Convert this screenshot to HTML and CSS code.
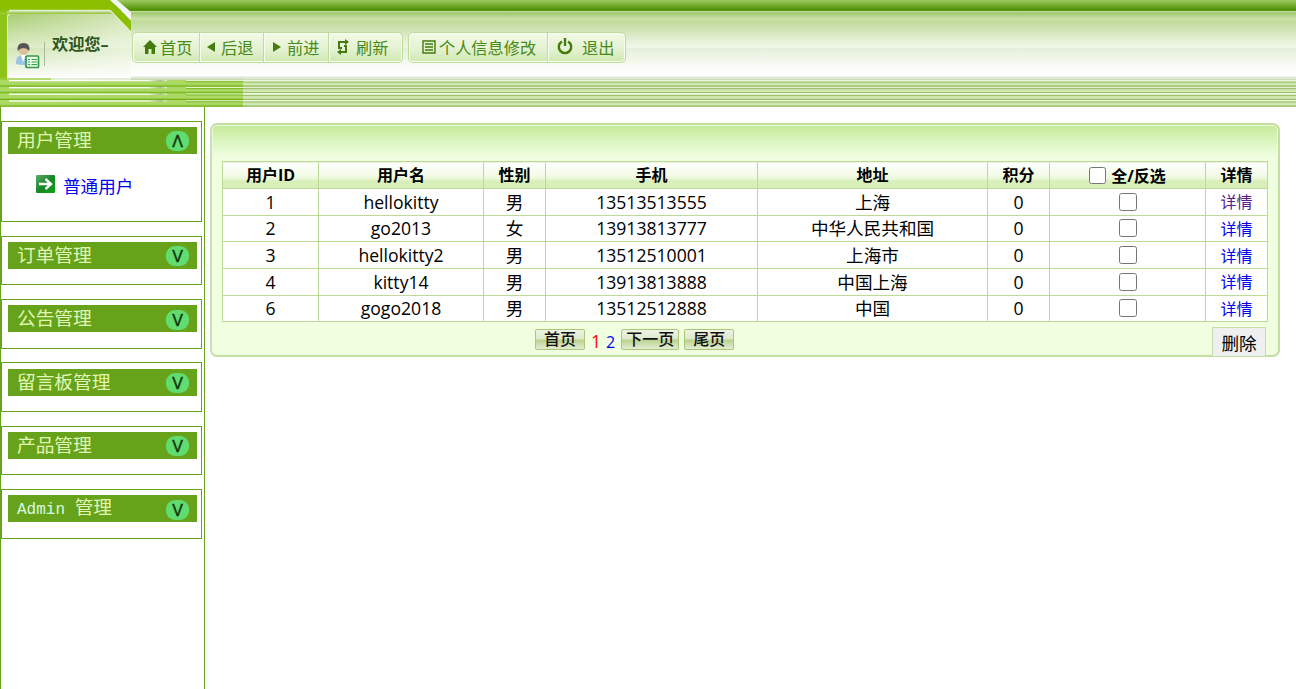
FILE: index.html
```html
<!DOCTYPE html>
<html lang="zh-CN">
<head>
<meta charset="UTF-8" />
<title>用户管理</title>
<link rel="stylesheet" href="styles.css">
</head>
<body>
<header class="header">
  <!-- 顶部左侧装饰 -->
  <svg class="header-art" width="243" height="107" viewBox="0 0 243 107">
    <defs>
      <linearGradient id="tab" x1="0" y1="0" x2="0" y2="1">
        <stop offset="0" stop-color="#a8cd72"/>
        <stop offset=".5" stop-color="#dcecc5"/>
        <stop offset=".52" stop-color="#d0e5b4"/>
        <stop offset="1" stop-color="#ffffff"/>
      </linearGradient>
      <linearGradient id="shine" x1="0" y1="0" x2="1" y2="0">
        <stop offset="0" stop-color="#fff" stop-opacity="0"/>
        <stop offset="1" stop-color="#fff" stop-opacity=".5"/>
      </linearGradient>
      <linearGradient id="line" x1="0" y1="0" x2="1" y2="0">
        <stop offset="0" stop-color="#fff"/>
        <stop offset=".88" stop-color="#f4f8ee"/>
        <stop offset=".96" stop-color="#a8bd8c"/>
        <stop offset="1" stop-color="#e8f3d8"/>
      </linearGradient>
      <pattern id="bars" width="243" height="6.65" y="80" patternUnits="userSpaceOnUse">
        <rect width="243" height="6.65" fill="#abd963"/>
        <rect y="5.4" width="243" height="1.25" fill="#6fb114"/>
      </pattern>
    </defs>
    <path d="M0 0H110L131 21V32L110 11H0Z" fill="#8bc000"/>
    <rect y="10" width="7" height="70" fill="#8fc41a"/>
    <path d="M7 80V17Q7 14 10 14H112L131 31V80Z" fill="url(#tab)"/>
    <path d="M7 80V17Q7 14 10 14H112L131 31V80Z" fill="url(#shine)"/>
    <path d="M110 11H117L131 24V32Z" fill="#8bc000"/>
    <path d="M110 0H117L131 12V20Z" fill="#f5f7f2"/>
    <path d="M9 10.5H110L131 32" fill="none" stroke="#e4efcd" stroke-width="1.3"/>
    <path d="M0 13.5H110" stroke="#a4cb38"/>
    <path d="M7.5 78V17Q7.5 14.5 10 14.5" fill="none" stroke="#e9f3da"/>
    <path d="M8 77.500H131" stroke="#fff" stroke-width="2"/>
    <path d="M0 79H51" stroke="#9fcf45" stroke-width="1.500"/>
    <path d="M51 79H243" stroke="#c9dbb0"/>
    <rect y="80" width="243" height="27" fill="url(#bars)"/>
    <g fill="url(#line)">
      <rect x="9" y="80" width="158" height="1.300"/>
      <rect x="9" y="87" width="158" height="1.300"/>
      <rect x="9" y="93.500" width="158" height="1.300"/>
      <rect x="9" y="100.300" width="158" height="1.300"/>
    </g>
    <g fill="#e4f3cb">
      <rect x="186" y="80" width="57" height="1.200"/>
      <rect x="186" y="87" width="57" height="1"/>
      <rect x="186" y="93.500" width="57" height="1"/>
      <rect x="186" y="100.300" width="57" height="1"/>
    </g>
    <path d="M186 81.700H243M186 88.500H243M186 95H243M186 101.800H243" stroke="#73b31d" stroke-width=".8"/>
  </svg>
  <div class="welcome">
    <svg class="user-icon" width="25" height="27" viewBox="0 0 25 27">
      <path d="M1 19Q1 13 7 12Q14 12 15 19V21Q8 23 1 21Z" fill="#9bc4e4"/>
      <path d="M6 12L8 19L11 12Z" fill="#fff"/>
      <circle cx="8.500" cy="7" r="5" fill="#e0bd9b"/>
      <path d="M2.800 8Q1.500 0 8.500 0Q15.500 0 14.200 8Q12 5 8.500 5Q5 5 2.800 8Z" fill="#555"/>
      <rect x="11" y="13" width="12.500" height="11.500" rx="1" fill="#e7fbe4" stroke="#36984a" stroke-width="1.700"/>
      <path d="M13 16.500H15M16.500 16.500H22M13 19H15M16.500 19H22M13 21.500H15M16.500 21.500H22" stroke="#36a04b" stroke-width="1.200"/>
    </svg>
    <span class="welcome-line"></span>
    <span class="welcome-text">欢迎您–</span>
  </div>
  <nav class="toolbar">
    <div class="tool-group">
      <a class="tool tool-home"><svg width="14" height="14" viewBox="0 0 14 14"><path d="M7 0L14 7H12V14H8.500V9H5.500V14H2V7H0Z" fill="#457a0d"/></svg>首页</a>
      <a class="tool tool-back"><svg width="9" height="10" viewBox="0 0 9 10"><path d="M8 0V10L0 5Z" fill="#457a0d"/></svg>后退</a>
      <a class="tool tool-next"><svg width="9" height="10" viewBox="0 0 9 10"><path d="M1 0V10L9 5Z" fill="#457a0d"/></svg>前进</a>
      <a class="tool tool-refresh"><svg width="14" height="16" viewBox="0 0 14 16"><path d="M6 9H3V3H10M8 7H10V13H3" fill="none" stroke="#457a0d" stroke-width="2"/><path d="M9 0L13 3L9 6ZM5 10L1 13L5 16Z" fill="#457a0d"/></svg>刷新</a>
    </div>
    <div class="tool-group">
      <a class="tool tool-info"><svg width="14" height="14" viewBox="0 0 14 14"><path d="M1 1H13V13H1ZM3 4H11M3 7H11M3 10H11" fill="none" stroke="#457a0d" stroke-width="1.400"/></svg>个人信息修改</a>
      <a class="tool tool-exit"><svg width="16" height="17" viewBox="0 0 16 17"><path d="M5 3.500A6.200 6.200 0 1 0 11 3.500M8 0V8" fill="none" stroke="#457a0d" stroke-width="2.400"/></svg>退出</a>
    </div>
  </nav>
</header>

<div class="main">
  <!-- 左侧菜单 -->
  <aside class="sidebar">
    <div class="menu menu-open">
      <div class="menu-title"><span>用户管理</span><i class="arrow">Λ</i></div>
      <div class="menu-item">
        <svg width="19" height="18" viewBox="0 0 19 18">
          <defs><linearGradient id="go" x1="0" y1="0" x2="1" y2="1"><stop offset="0" stop-color="#5cab68"/><stop offset=".5" stop-color="#18862a"/><stop offset="1" stop-color="#12a012"/></linearGradient></defs>
          <rect width="19" height="18" rx="1" fill="url(#go)"/>
          <path d="M3 9H14M9.500 4L15 9L9.500 14" fill="none" stroke="#fff" stroke-width="2.400"/>
        </svg>
        <a href="#">普通用户</a>
      </div>
    </div>
    <div class="menu"><div class="menu-title"><span>订单管理</span><i class="arrow">V</i></div></div>
    <div class="menu"><div class="menu-title"><span>公告管理</span><i class="arrow">V</i></div></div>
    <div class="menu"><div class="menu-title"><span>留言板管理</span><i class="arrow">V</i></div></div>
    <div class="menu"><div class="menu-title"><span>产品管理</span><i class="arrow">V</i></div></div>
    <div class="menu"><div class="menu-title"><span><b class="latin">Admin</b> 管理</span><i class="arrow">V</i></div></div>
  </aside>

  <!-- 用户列表 -->
  <section class="panel">
    <table class="list">
      <colgroup>
        <col class="c-id"><col class="c-name"><col class="c-sex"><col class="c-phone"><col class="c-addr"><col class="c-score"><col class="c-check"><col class="c-more">
      </colgroup>
      <tr><th>用户ID</th><th>用户名</th><th>性别</th><th>手机</th><th>地址</th><th>积分</th><th><label class="check-all"><input type="checkbox"><span>全/反选</span></label></th><th>详情</th></tr>
      <tr><td>1</td><td>hellokitty</td><td>男</td><td>13513513555</td><td>上海</td><td>0</td><td><input type="checkbox"></td><td><a class="seen" href="#">详情</a></td></tr>
      <tr><td>2</td><td>go2013</td><td>女</td><td>13913813777</td><td>中华人民共和国</td><td>0</td><td><input type="checkbox"></td><td><a href="#">详情</a></td></tr>
      <tr><td>3</td><td>hellokitty2</td><td>男</td><td>13512510001</td><td>上海市</td><td>0</td><td><input type="checkbox"></td><td><a href="#">详情</a></td></tr>
      <tr><td>4</td><td>kitty14</td><td>男</td><td>13913813888</td><td>中国上海</td><td>0</td><td><input type="checkbox"></td><td><a href="#">详情</a></td></tr>
      <tr><td>6</td><td>gogo2018</td><td>男</td><td>13512512888</td><td>中国</td><td>0</td><td><input type="checkbox"></td><td><a href="#">详情</a></td></tr>
    </table>
    <div class="panel-foot">
      <div class="pager">
        <a class="page-btn">首页</a>
        <span class="page-now">1</span>
        <a class="page-num" href="#">2</a>
        <a class="page-btn page-next">下一页</a>
        <a class="page-btn">尾页</a>
      </div>
      <button class="delete">删除</button>
    </div>
  </section>
</div>
</body>
</html>
```
FILE: styles.css
```css
* {
  box-sizing: border-box;
}
html, body {
  margin: 0;
  padding: 0;
  height: 100%;
}
body {
  display: flex;
  flex-direction: column;
  overflow: hidden;
  background: #fff;
  font-family: "Open Sans", "Noto Sans CJK SC", sans-serif;
  font-size: 17.6px;
}
a {
  color: #0000ee;
  text-decoration: none;
}

/* 顶部 */
.header {
  position: relative;
  display: flex;
  flex: none;
  height: 107px;
  background:
    repeating-linear-gradient(#f4faeb 0, #dff0c5 1.2px, #8fb764 2px, #cde5ab 3px, #d5ebb5 5px, #8fb764 6px, #a9cb80 6.65px) 0 80px / 100% 27px no-repeat,
    linear-gradient(#9ccb62 0, #559408 9px, #569508 11px, #cde1af 11px, #9cc86a 13px, #a6cd79 14px, #cce2ab 19px, #bfda9a 21px, #e8f2dc 42px, #eff6e7 47px, #e5efd9 49px, #fafcf7 67px, #fff 76px, #dfe5da 77px, #e0e8d6 79px, #b6d491 80px);
}
.header-art {
  position: absolute;
  left: 0;
  top: 0;
}
.welcome {
  position: relative;
  display: flex;
  align-items: flex-start;
  width: 132px;
  padding: 34px 0 0 15px;
}
.user-icon {
  margin-top: 9px;
}
.welcome-line {
  width: 1px;
  height: 24px;
  margin: 8px 7px 0 4px;
  background: #a9b79a;
}
.welcome-text {
  font-size: 16.2px;
  line-height: 21px;
  font-weight: bold;
  color: #2c541c;
  white-space: nowrap;
}
.toolbar {
  position: relative;
  display: flex;
  gap: 5px;
  padding-top: 32px;
}
.tool-group {
  display: flex;
  height: 31px;
  border: 1px solid #bfdc9c;
  border-radius: 5px;
  background: linear-gradient(#f2fae6, #e2f1cf 60%, #cfe7b0);
  box-shadow: inset 0 0 0 1px #f7fcf0;
}
.tool {
  display: flex;
  align-items: center;
  padding-bottom: 2px;
  font-size: 16.2px;
  color: #478a17;
  white-space: nowrap;
}
.tool + .tool {
  border-left: 1px solid #bfdc9c;
  box-shadow: inset 1px 0 #f7fcf0;
}
.tool-home { width: 66px; padding-left: 10px; gap: 3px; }
.tool-back { width: 64px; padding-left: 7px; gap: 5px; }
.tool-next { width: 65px; padding-left: 8px; gap: 6px; }
.tool-refresh { width: 74px; padding-left: 7px; gap: 6px; }
.tool-info { width: 138px; padding-left: 13px; gap: 3px; }
.tool-exit { width: 78px; padding-left: 9px; gap: 9px; }

/* 左侧菜单 */
.main {
  display: flex;
  align-items: flex-start;
  flex: 1;
}
.sidebar {
  display: flex;
  flex-direction: column;
  gap: 13.8px;
  flex: none;
  align-self: stretch;
  width: 205px;
  padding: 14.2px 2px 0 0;
  border-left: 1px solid #66a31a;
  border-right: 1px solid #66a31a;
}
.menu {
  height: 49.6px;
  width: 201px;
  padding: 5.2px 4px 0 6px;
  border: 1px solid #66a31a;
}
.menu-open {
  height: 100.6px;
  padding-top: 4.8px;
}
.menu-title {
  display: flex;
  align-items: center;
  justify-content: space-between;
  height: 27px;
  padding: 0 8px 0 9px;
  background: #66a31a;
  color: #e2f7b5;
  font-family: "Liberation Serif", "Noto Sans CJK SC", serif;
  font-size: 18.7px;
  line-height: 27px;
}
.latin {
  margin-right: 5px;
  font-family: "Liberation Mono", monospace;
  font-size: 16px;
  font-weight: normal;
  color: #d9fbe5;
}
.arrow {
  width: 23px;
  height: 20px;
  margin-top: 2px;
  border-radius: 9px;
  background: #60dc70;
  color: #12320c;
  font-family: "Liberation Sans", sans-serif;
  font-size: 16px;
  font-style: normal;
  line-height: 22px;
  text-align: center;
  -webkit-text-stroke: .4px #12320c;
}
.menu-item {
  display: flex;
  align-items: center;
  gap: 8px;
  padding: 19px 0 0 28px;
  line-height: 26px;
}
.menu-item svg {
  margin-top: -4px;
}

/* 右侧面板 */
.panel {
  width: 1070px;
  height: 234px;
  margin: 16px 0 0 5px;
  padding: 36px 10px 0 10px;
  border: 2px solid #c3dfa3;
  border-left-color: #cbdfb9;
  border-radius: 7px;
  background: linear-gradient(#c4eb98 0, #daf4bd 15px, #f1ffe1 32px);
  box-shadow: inset 0 0 0 1px #edfbdc;
}
.list {
  width: 1046px;
  table-layout: fixed;
  border-collapse: collapse;
  background: #fff;
}
.c-id { width: 96px; }
.c-name { width: 165px; }
.c-sex { width: 62px; }
.c-phone { width: 212px; }
.c-addr { width: 230px; }
.c-score { width: 62px; }
.c-check { width: 156px; }
.c-more { width: 62px; }
.list th, .list td {
  height: 26.67px;
  padding: 0;
  border: 1px solid #bddb96;
  text-align: center;
  line-height: 24px;
}
.list th {
  font-size: 16px;
  background: linear-gradient(#fff 0, #f2fbe6 50%, #e6f5d2 67%, #d8efba 68%, #d8efba 100%);
}
.list td a {
  font-size: 16px;
}
.list .seen {
  color: #551a8b;
}
.list input {
  display: block;
  width: 18px;
  height: 18px;
  margin: 0 auto;
}
.check-all {
  display: flex;
  justify-content: center;
  align-items: center;
  gap: 5px;
}
.list .check-all input {
  width: 17px;
  height: 17px;
  margin: 0;
}
.check-all span {
  padding-top: 2px;
}
.panel-foot {
  display: flex;
  justify-content: space-between;
  align-items: flex-start;
  height: 34px;
  padding: 5px 2px 0 313px;
}
.pager {
  display: flex;
  align-items: flex-start;
  padding-top: 2px;
}
.page-btn {
  width: 50px;
  height: 21px;
  border: 1px solid #a8c878;
  border-radius: 2px;
  background: linear-gradient(#eef3e4, #dde8cb 48%, #b9d28d 52%, #e3ecd2);
  color: #111;
  font-size: 16px;
  font-weight: 500;
  line-height: 18px;
  text-align: center;
}
.page-next {
  width: 58px;
  margin-right: 5px;
}
.page-now {
  margin: 0 5px 0 6px;
  color: #f00;
  line-height: 25px;
}
.page-num {
  margin-right: 6px;
  font-size: 16px;
  line-height: 27px;
}
.delete {
  width: 54px;
  height: 29px;
  padding: 0;
  border: 1px solid #c8dcae;
  border-bottom: 0;
  background: #efefef;
  color: #000;
  font-family: inherit;
  font-size: 17.6px;
}
```
